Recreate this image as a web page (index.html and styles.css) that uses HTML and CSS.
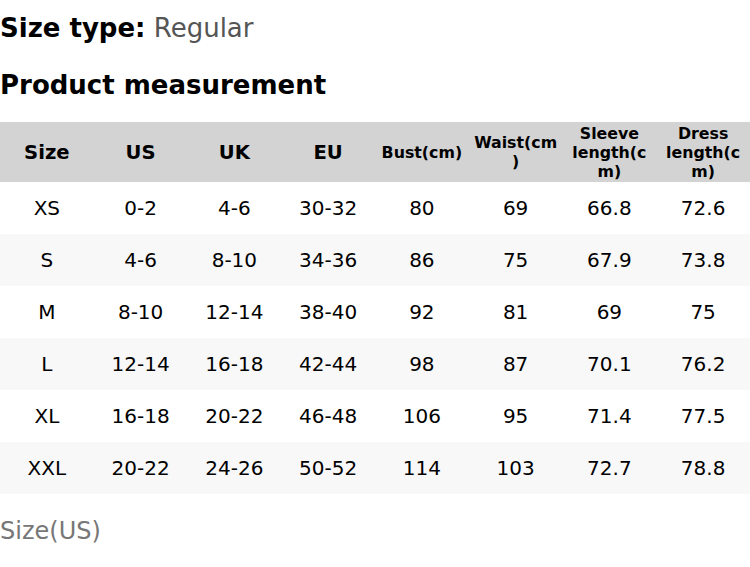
FILE: index.html
```html
<!DOCTYPE html>
<html>
<head>
<meta charset="utf-8">
<link rel="stylesheet" href="styles.css">
</head>
<body>
<div class="page">
  <p class="type"><b>Size type:</b> <span class="type-val">Regular</span></p>
  <h2 class="title">Product measurement</h2>
  <div class="table">
    <div class="row head">
      <div class="cell big">Size</div>
      <div class="cell big">US</div>
      <div class="cell big">UK</div>
      <div class="cell big">EU</div>
      <div class="cell small">Bust(cm)</div>
      <div class="cell small">Waist(cm)</div>
      <div class="cell small">Sleeve length(cm)</div>
      <div class="cell small">Dress length(cm)</div>
    </div>
    <div class="row">
      <div class="cell">XS</div><div class="cell">0-2</div><div class="cell">4-6</div><div class="cell">30-32</div><div class="cell">80</div><div class="cell">69</div><div class="cell">66.8</div><div class="cell">72.6</div>
    </div>
    <div class="row alt">
      <div class="cell">S</div><div class="cell">4-6</div><div class="cell">8-10</div><div class="cell">34-36</div><div class="cell">86</div><div class="cell">75</div><div class="cell">67.9</div><div class="cell">73.8</div>
    </div>
    <div class="row">
      <div class="cell">M</div><div class="cell">8-10</div><div class="cell">12-14</div><div class="cell">38-40</div><div class="cell">92</div><div class="cell">81</div><div class="cell">69</div><div class="cell">75</div>
    </div>
    <div class="row alt">
      <div class="cell">L</div><div class="cell">12-14</div><div class="cell">16-18</div><div class="cell">42-44</div><div class="cell">98</div><div class="cell">87</div><div class="cell">70.1</div><div class="cell">76.2</div>
    </div>
    <div class="row">
      <div class="cell">XL</div><div class="cell">16-18</div><div class="cell">20-22</div><div class="cell">46-48</div><div class="cell">106</div><div class="cell">95</div><div class="cell">71.4</div><div class="cell">77.5</div>
    </div>
    <div class="row alt">
      <div class="cell">XXL</div><div class="cell">20-22</div><div class="cell">24-26</div><div class="cell">50-52</div><div class="cell">114</div><div class="cell">103</div><div class="cell">72.7</div><div class="cell">78.8</div>
    </div>
  </div>
  <p class="note">Size(US)</p>
</div>
</body>
</html>
```
FILE: styles.css
```css
html, body {
  margin: 0;
  padding: 0;
  background: #ffffff;
}
body {
  font-family: "DejaVu Sans", sans-serif;
  color: #000;
}
.page {
  width: 750px;
}
.type {
  margin: 13px 0 0 0;
  font-size: 26px;
  line-height: 30px;
}
.type b {
  font-weight: bold;
}
.type-val {
  color: #555555;
}
.title {
  margin: 27px 0 0 0;
  font-size: 26px;
  line-height: 30px;
  font-weight: bold;
}
.table {
  margin-top: 22px;
}
.row {
  display: grid;
  grid-template-columns: repeat(8, 1fr);
  height: 52px;
}
.row.head {
  height: 60px;
  background: #d3d3d3;
  font-weight: bold;
}
.row.alt {
  background: #f8f8f8;
}
.cell {
  display: flex;
  align-items: center;
  justify-content: center;
  text-align: center;
  font-size: 20px;
  padding: 0 3px;
  min-width: 0;
}
.cell.big {
  font-size: 19.6px;
}
.cell.small {
  font-size: 15.8px;
  line-height: 19px;
  overflow-wrap: anywhere;
}
.note {
  margin: 23px 0 0 0;
  font-size: 24px;
  line-height: 28px;
  color: #777777;
}
```
